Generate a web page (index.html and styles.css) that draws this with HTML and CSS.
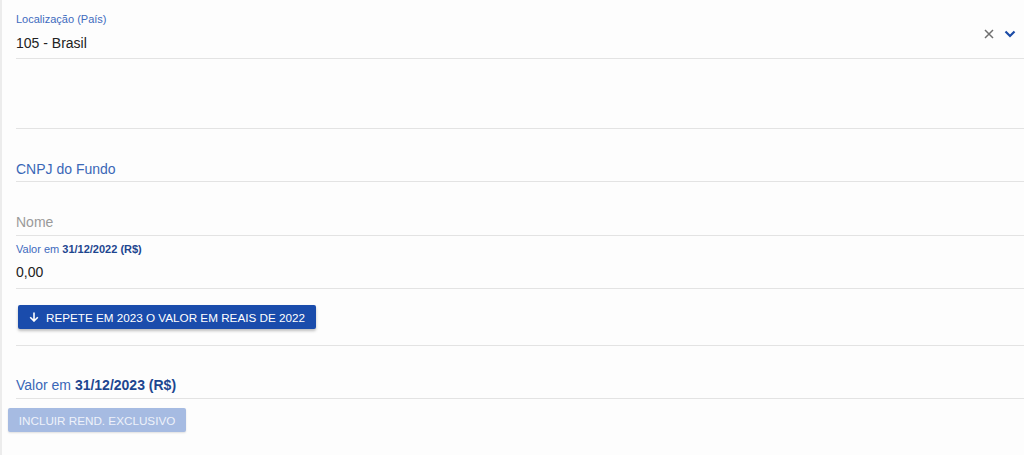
FILE: index.html
```html
<!DOCTYPE html>
<html lang="pt-BR">
<head>
    <meta charset="UTF-8">
    <title>Fundo</title>
    <link rel="stylesheet" href="styles.css">
</head>
<body>
    <div class="form">
        <div class="field field-select">
            <div class="label">Localização (País)</div>
            <div class="select-row">
                <span class="value">105 - Brasil</span>
                <span class="icons">
                    <svg class="clear" width="10" height="10" viewBox="0 0 10 10"><path d="M1 1L9 9M9 1L1 9" stroke="#6f6f6f" stroke-width="1.5"/></svg>
                    <svg class="chevron" width="12" height="8" viewBox="0 0 12 8"><path d="M1.5 1.5L6 6L10.5 1.5" fill="none" stroke="#1b4ba6" stroke-width="2.2"/></svg>
                </span>
            </div>
        </div>
        <div class="field field-empty"></div>
        <div class="field field-cnpj">
            <div class="placeholder blue">CNPJ do Fundo</div>
        </div>
        <div class="field field-nome">
            <div class="placeholder gray">Nome</div>
        </div>
        <div class="field field-valor">
            <div class="label">Valor em <b>31/12/2022 (R$)</b></div>
            <div class="value">0,00</div>
        </div>
        <div class="field field-button">
            <button class="btn">
                <svg width="10" height="10" viewBox="0 0 10 10"><path d="M5 0.5V9M1.2 5.3L5 9L8.8 5.3" fill="none" stroke="#fff" stroke-width="1.6"/></svg>
                REPETE EM 2023 O VALOR EM REAIS DE 2022
            </button>
        </div>
        <div class="field field-valor2">
            <div class="placeholder blue">Valor em <b>31/12/2023 (R$)</b></div>
        </div>
        <button class="btn btn-disabled" disabled>INCLUIR REND. EXCLUSIVO</button>
    </div>
</body>
</html>
```

FILE: styles.css
```css
body {
    margin: 0;
    background-color: #fdfdfd;
    font-family: "Liberation Sans", Arial, sans-serif;
    border-left: 2px solid #ececec;
    height: 455px;
    box-sizing: border-box;
}

.form {
    padding-left: 14px;
    display: flex;
    flex-direction: column;
}

.field {
    border-bottom: 1px solid #e3e3e3;
    box-sizing: border-box;
}

.label {
    font-size: 11px;
    line-height: 14px;
    color: #3e6bbd;
}

.label b {
    color: #1d4690;
}

.value {
    font-size: 14px;
    line-height: 20px;
    color: #222;
}

.placeholder {
    font-size: 14px;
    line-height: 20px;
}

.placeholder.blue {
    color: #3a67b7;
}

.placeholder.blue b {
    color: #1d4690;
}

.placeholder.gray {
    color: #9a9a9a;
}

.field-select {
    height: 59px;
    padding-top: 12px;
}

.select-row {
    display: flex;
    justify-content: space-between;
    align-items: center;
    margin-top: 7px;
}

.icons {
    display: flex;
    align-items: center;
    gap: 10px;
    margin-right: 8px;
    margin-top: -19px;
}

.field-empty {
    height: 70px;
}

.field-cnpj {
    height: 53px;
    padding-top: 30px;
}

.field-nome {
    height: 54px;
    padding-top: 30px;
}

.field-valor {
    height: 53px;
    padding-top: 6px;
}

.field-valor .value {
    margin-top: 6px;
}

.field-button {
    height: 57px;
    padding-top: 16px;
}

.field-valor2 {
    height: 53px;
    padding-top: 29px;
}

.btn {
    display: flex;
    align-items: center;
    gap: 7px;
    height: 24px;
    padding: 0 11px;
    margin-left: 2px;
    border: none;
    border-radius: 2px;
    background-color: #1a4cac;
    color: #fff;
    font-family: "Liberation Sans", Arial, sans-serif;
    font-size: 11.7px;
    white-space: nowrap;
    box-shadow: 0 2px 3px rgba(0,0,0,0.25);
    cursor: pointer;
}

.btn-disabled {
    align-self: flex-start;
    margin-left: -8px;
    margin-top: 9px;
    width: 178px;
    justify-content: center;
    background-color: #a6bbe2;
    color: #eef2fa;
    box-shadow: 0 1px 2px rgba(0,0,0,0.12);
}
```
